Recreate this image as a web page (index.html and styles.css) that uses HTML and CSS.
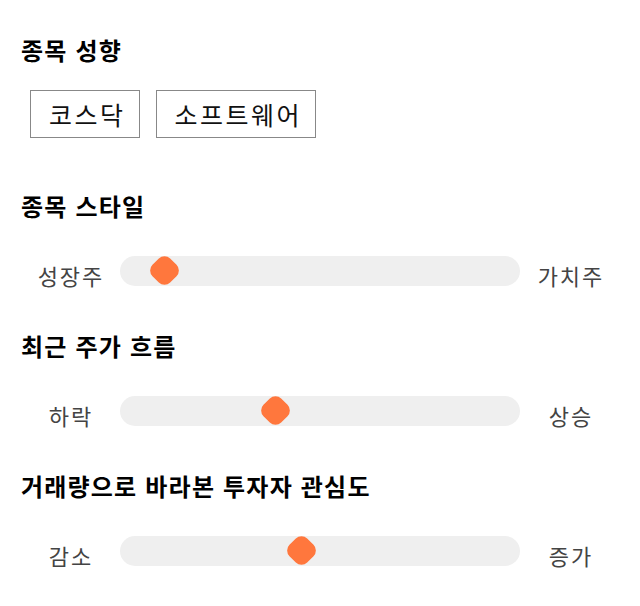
FILE: index.html
```html
<!DOCTYPE html>
<html lang="ko">
<head>
<meta charset="utf-8">
<link rel="stylesheet" href="styles.css">
</head>
<body>
<main class="panel">
  <h2 class="title">종목 성향</h2>
  <div class="tags">
    <span class="tag">코스닥</span>
    <span class="tag">소프트웨어</span>
  </div>

  <h2 class="title sec">종목 스타일</h2>
  <div class="scale">
    <span class="end">성장주</span>
    <div class="track"><span class="thumb" style="--v:0.08"></span></div>
    <span class="end">가치주</span>
  </div>

  <h2 class="title sec2">최근 주가 흐름</h2>
  <div class="scale">
    <span class="end">하락</span>
    <div class="track"><span class="thumb" style="--v:0.381"></span></div>
    <span class="end">상승</span>
  </div>

  <h2 class="title sec2">거래량으로 바라본 투자자 관심도</h2>
  <div class="scale">
    <span class="end">감소</span>
    <div class="track"><span class="thumb" style="--v:0.449"></span></div>
    <span class="end">증가</span>
  </div>
</main>
</body>
</html>
```

FILE: styles.css
```css
html, body {
  margin: 0;
  padding: 0;
  background: #fff;
}
.panel {
  padding: 34px 20px 40px 20px;
  font-family: "Noto Sans CJK KR", "Noto Sans", sans-serif;
  color: #000;
}
.title {
  margin: 0;
  font-size: 24px;
  line-height: 32px;
  font-weight: 700;
  letter-spacing: 1.2px;
  padding-left: 1px;
}
.sec { margin-top: 52px; }
.sec2 { margin-top: 44px; }
.tags {
  display: flex;
  gap: 16px;
  margin-top: 24px;
  padding-left: 10px;
}
.tag {
  display: block;
  height: 46px;
  line-height: 46px;
  padding: 0 13px 0 18px;
  border: 1px solid #888;
  font-size: 25px;
  letter-spacing: 2.5px;
  color: #111;
}
.scale {
  display: flex;
  align-items: center;
  margin-top: 34px;
  height: 30px;
}
.end {
  width: 100px;
  flex: none;
  text-align: center;
  font-size: 22px;
  line-height: 30px;
  letter-spacing: 2px;
  text-indent: 2px;
  color: #444;
  position: relative;
  top: 4px;
}
.track {
  flex: 1;
  height: 30px;
  background: #efefef;
  border-radius: 15px;
  position: relative;
}
.thumb {
  position: absolute;
  top: 0;
  left: calc(var(--v) * (100% - 29px));
  width: 29px;
  height: 29px;
  display: flex;
  align-items: center;
  justify-content: center;
}
.thumb::before {
  content: "";
  width: 25px;
  height: 25px;
  border-radius: 8px;
  background: #ff773d;
  transform: rotate(45deg);
}
```
